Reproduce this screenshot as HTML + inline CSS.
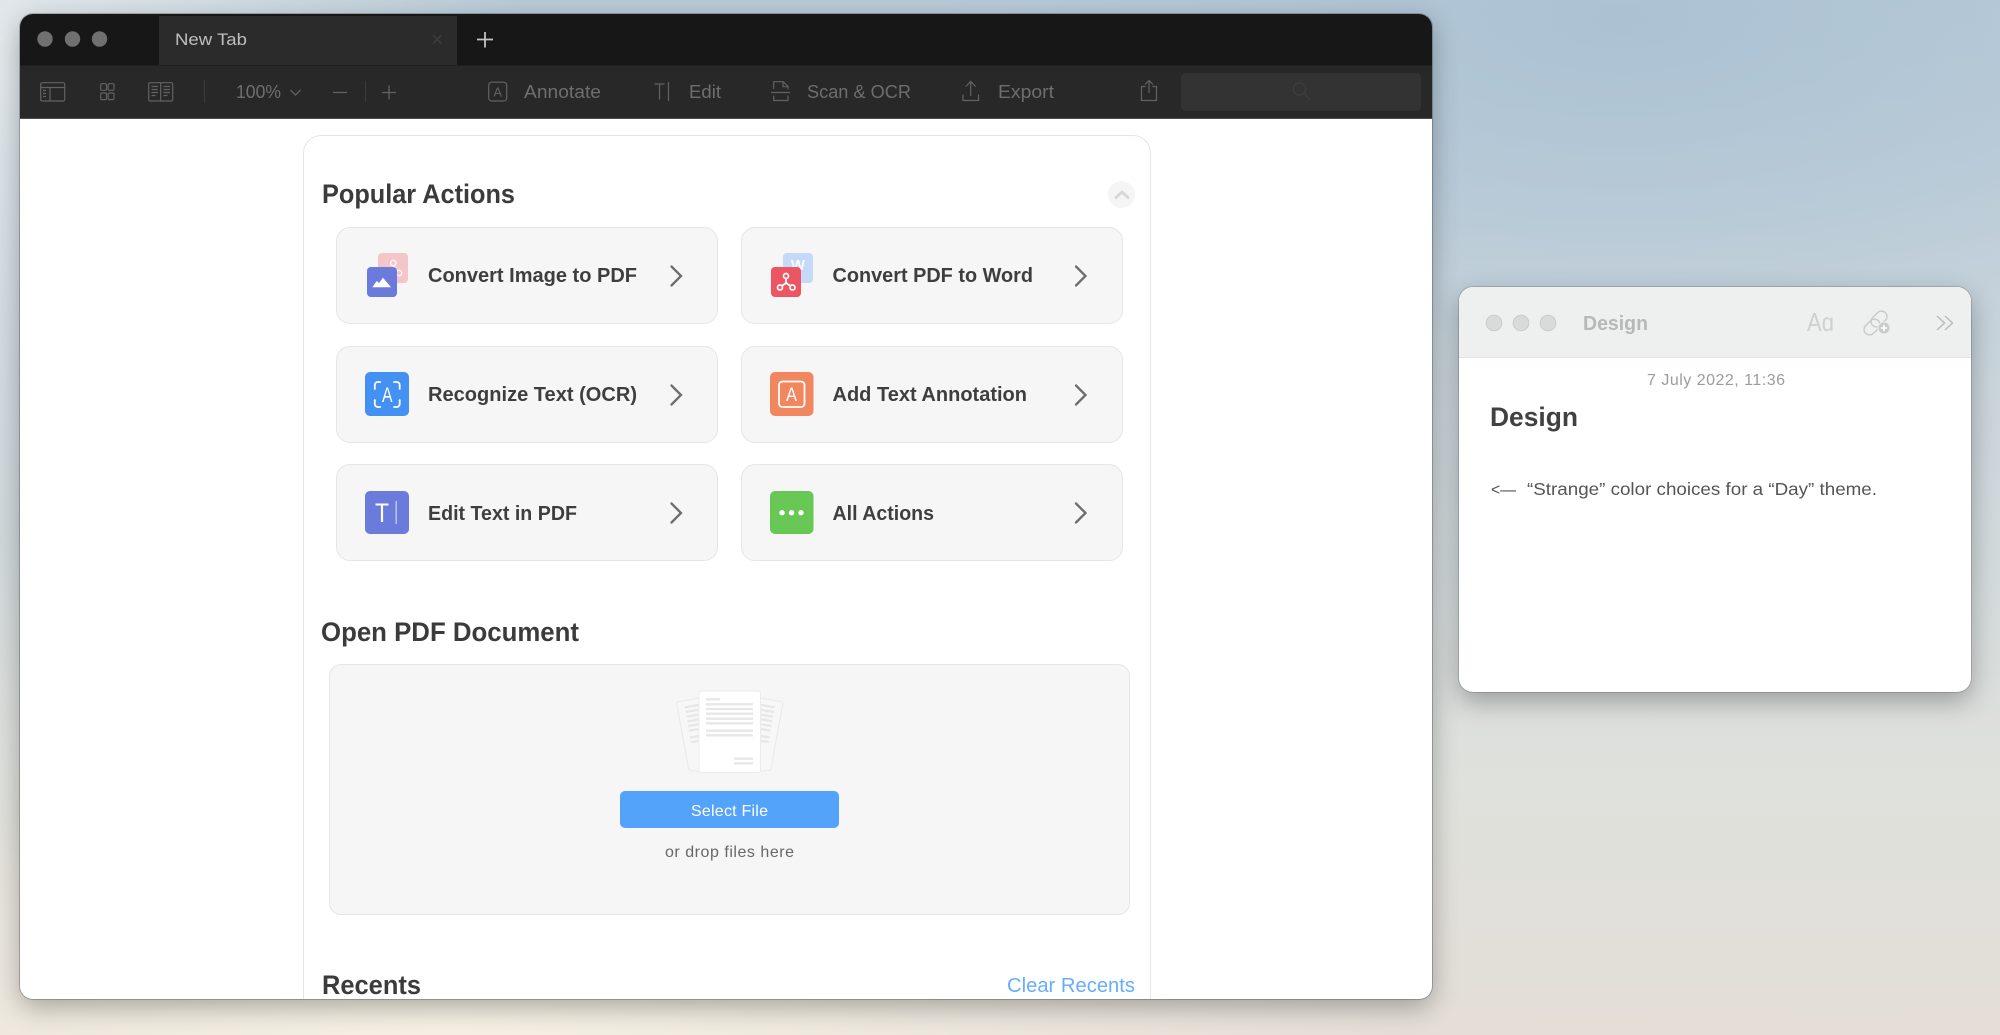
<!DOCTYPE html>
<html lang="en">
<head>
<meta charset="utf-8">
<title>PDF Expert and Notes</title>
<style>
html,body{margin:0;padding:0;width:2000px;height:1035px;overflow:hidden;font-family:"Liberation Sans",sans-serif}
#bg{position:absolute;left:0;top:0;width:2000px;height:1035px;background:
radial-gradient(ellipse 700px 330px at 1620px 20px,rgba(172,194,211,1) 0,rgba(172,194,211,0) 100%),
radial-gradient(ellipse 520px 500px at 0px 40px,rgba(232,236,238,.9) 0,rgba(232,236,238,0) 100%),
radial-gradient(ellipse 950px 280px at 450px 1045px,rgba(246,241,228,1) 0,rgba(246,241,228,0) 100%),
linear-gradient(to bottom,#b9cbd8 0,#c5d2db 300px,#d3dadc 560px,#dfe1dc 780px,#e2dfd9 960px,#e4ded6 1035px)}
.win{position:absolute;overflow:hidden;background:#fff;box-sizing:border-box}
#main{left:20px;top:14px;width:1412px;height:985px;border-radius:13px;box-shadow:0 0 0 1px rgba(0,0,0,.22),0 8px 26px rgba(0,0,0,.3)}
#notes{left:1459px;top:287px;width:512px;height:405px;border-radius:14px;box-shadow:0 0 0 1px rgba(0,0,0,.14),0 9px 26px rgba(0,0,0,.3)}
.abs{position:absolute;box-sizing:border-box}
.card{position:absolute;box-sizing:border-box;width:382px;height:97px;background:#f6f6f6;border:1.5px solid #e6e6e6;border-radius:14px}
#ov{position:absolute;left:0;top:0;display:block;overflow:hidden}
text{font-family:"Liberation Sans",sans-serif;white-space:pre}
.tb{font-size:18px;fill:#6e6e6e}
.ct{font-size:20px;font-weight:700;fill:#3e3e3e}
.h{font-size:26.5px;font-weight:700;fill:#3b3b3b}
</style>
</head>
<body>
<div id="bg"></div>

<div id="main" class="win">
  <div class="abs" style="left:0;top:0;width:1412px;height:51px;background:#171717"></div>
  <div class="abs" style="left:139px;top:2px;width:298px;height:49px;background:#2b2b2b"></div>
  <div class="abs" style="left:0;top:51px;width:1412px;height:54px;background:#282828;border-top:1px solid #202020;border-bottom:1px solid #4e4e4e"></div>
  <div class="abs" style="left:1161px;top:59px;width:240px;height:38px;background:#333;border-radius:5px"></div>
  <div class="abs" style="left:283px;top:121px;width:848px;height:864px;border:1.5px solid #e6e6e6;border-bottom:0;border-radius:18px 18px 0 0"></div>
  <div class="abs" style="left:1088px;top:166.500px;width:27px;height:27px;border-radius:50%;background:#f5f5f5"></div>
  <div class="card" style="left:316px;top:213px"></div>
  <div class="card" style="left:721px;top:213px"></div>
  <div class="card" style="left:316px;top:332px"></div>
  <div class="card" style="left:721px;top:332px"></div>
  <div class="card" style="left:316px;top:450px"></div>
  <div class="card" style="left:721px;top:450px"></div>
  <div class="abs" style="left:309px;top:649.500px;width:801px;height:251px;background:#f6f6f6;border:1.5px solid #e6e6e6;border-radius:12px"></div>
  <div class="abs" style="left:600px;top:777px;width:219px;height:37px;background:#54a3fb;border-radius:5px"></div>
</div>

<div id="notes" class="win">
  <div class="abs" style="left:0;top:0;width:512px;height:71px;background:#eef0ef;border-bottom:1px solid #e2e3e2"></div>
</div>

<svg id="ov" width="2000" height="1035" viewBox="0 0 2000 1035" xmlns="http://www.w3.org/2000/svg">
  <!-- main traffic lights -->
  <circle cx="45" cy="39" r="7.700" fill="#707070"/><circle cx="72.500" cy="39" r="7.700" fill="#707070"/><circle cx="99.500" cy="39" r="7.700" fill="#707070"/>
  <text x="175" y="45" font-size="17" fill="#bebebe" textLength="72" lengthAdjust="spacingAndGlyphs">New Tab</text>
  <path d="M433 35l8.500 8.500M441.500 35l-8.500 8.500" stroke="#3e3e3e" stroke-width="1.400" fill="none"/>
  <path d="M485 32v15.500M477 39.500h16" stroke="#c4c4c4" stroke-width="1.800" fill="none"/>

  <!-- toolbar icons -->
  <g fill="none" stroke="#626262" stroke-width="1.200">
    <rect x="40.700" y="82.700" width="24" height="18.300" rx="1.500"/><path d="M40.700 87.500h24M50 87.500v13.500M43 90.500h3M43 93.500h3M43 96.500h3"/>
    <rect x="100.700" y="83.700" width="5.800" height="6.600" rx="1.200"/><rect x="108.200" y="83.700" width="5.800" height="6.600" rx="1.200"/>
    <rect x="100.700" y="93" width="5.800" height="6.600" rx="1.200"/><rect x="108.200" y="93" width="5.800" height="6.600" rx="1.200"/>
    <rect x="148.700" y="82.700" width="24" height="18.300" rx="1.500"/><path d="M160.700 82.700v18.300M151.500 86.500h6.500M151.500 89.500h6.500M151.500 92.500h6.500M151.500 95.500h4M163.500 86.500h6.500M163.500 89.500h6.500M163.500 92.500h6.500M163.500 95.500h4"/>
  </g>
  <path d="M204.500 80v23M365.500 81v21" stroke="#3a3a3a" stroke-width="1"/>
  <text class="tb" x="236" y="98" textLength="45" lengthAdjust="spacingAndGlyphs">100%</text>
  <path d="M290.500 90l5 5 5-5" stroke="#626262" stroke-width="1.300" fill="none"/>
  <path d="M333 92.500h14M382 92.500h14M389 85.500v14" stroke="#626262" stroke-width="1.300" fill="none"/>
  <rect x="488.700" y="82.200" width="18" height="18.800" rx="3" fill="none" stroke="#626262" stroke-width="1.200"/>
  <text x="497.700" y="96.500" font-size="13" fill="#626262" text-anchor="middle">A</text>
  <text class="tb" x="524" y="98" textLength="77" lengthAdjust="spacingAndGlyphs">Annotate</text>
  <path d="M654.500 84h10M659.500 84v15.500M668.500 82v19" stroke="#626262" stroke-width="1.200" fill="none"/>
  <text class="tb" x="689" y="98" textLength="32" lengthAdjust="spacingAndGlyphs">Edit</text>
  <path d="M773.700 89V81.700h9.500l4.800 4.800V89M771 92.500h19M773.700 95.500v5h14.300v-5M783 81.700v5h5" stroke="#626262" stroke-width="1.200" fill="none"/>
  <text class="tb" x="807" y="98" textLength="104" lengthAdjust="spacingAndGlyphs">Scan &amp; OCR</text>
  <path d="M970.700 96V81.500M965.800 86.500l4.900-5 4.900 5M963 94.500v6h15.500v-6" stroke="#626262" stroke-width="1.200" fill="none"/>
  <text class="tb" x="998" y="98" textLength="56" lengthAdjust="spacingAndGlyphs">Export</text>
  <path d="M1149 93V80.700M1145 84.500l4-4 4 4M1145.500 86.500h-4v14h15v-14h-4" stroke="#626262" stroke-width="1.200" fill="none"/>
  <circle cx="1299.500" cy="89" r="6.200" fill="none" stroke="#3d3d3d" stroke-width="1.500"/><path d="M1304 93.500l6 6" stroke="#3d3d3d" stroke-width="1.800" fill="none"/>

  <!-- Popular actions -->
  <text class="h" x="322" y="203" textLength="193" lengthAdjust="spacingAndGlyphs">Popular Actions</text>
  <path d="M1116 197.500l6-5.500 6 5.500" stroke="#d6d6d6" stroke-width="2.800" fill="none" stroke-linecap="round" stroke-linejoin="round"/>

  <!-- icon: image to pdf -->
  <rect x="378" y="253" width="30" height="30" rx="4" fill="#f4c6c9"/>
  <g fill="none" stroke="#fff" stroke-width="1.400" opacity=".85"><circle cx="393.300" cy="263" r="2.700"/><circle cx="399" cy="273" r="2.700"/><path d="M393.800 266l3.500 5"/></g>
  <rect x="367" y="267" width="30" height="30" rx="4" fill="#6a7bdc"/>
  <path d="M372.300 287.300l4.400-6.300 2.300 2 4-5.300 8 9.600z" fill="#fff"/>
  <text class="ct" x="428" y="282" textLength="209" lengthAdjust="spacingAndGlyphs">Convert Image to PDF</text>
  <path d="M671.500 266.500l9.500 9.500-9.500 9.500" stroke="#6d6d6d" stroke-width="2.300" fill="none" stroke-linecap="round"/>

  <!-- icon: pdf to word -->
  <rect x="783" y="253" width="30" height="30" rx="4" fill="#c4daf8"/>
  <text x="798" y="270" font-size="15" font-weight="700" fill="#fff" text-anchor="middle" opacity=".9">W</text>
  <rect x="771" y="267" width="30" height="30" rx="4" fill="#ec5561"/>
  <g fill="none" stroke="#fff" stroke-width="1.700"><circle cx="786" cy="276" r="2.500"/><circle cx="780" cy="287.500" r="2.500"/><circle cx="792.500" cy="287.500" r="2.500"/><path d="M786 278.500v4.500M786 283l-4.200 3M786 283l4.600 3"/></g>
  <text class="ct" x="832.500" y="282" textLength="200.500" lengthAdjust="spacingAndGlyphs">Convert PDF to Word</text>
  <path d="M1076 266.500l9.500 9.500-9.500 9.500" stroke="#6d6d6d" stroke-width="2.300" fill="none" stroke-linecap="round"/>

  <!-- icon: OCR -->
  <rect x="365" y="372" width="44" height="44" rx="5" fill="#4391f2"/>
  <path d="M374.800 389v-4a3 3 0 0 1 3-3h2.500M394 382h2.700a3 3 0 0 1 3 3v4M399.700 400v4a3 3 0 0 1-3 3H394M380.300 407h-2.500a3 3 0 0 1-3-3v-4" stroke="#fff" stroke-width="1.800" fill="none" stroke-linecap="round"/>
  <text x="382" y="402" font-size="21" fill="#fff" textLength="10.500" lengthAdjust="spacingAndGlyphs">A</text>
  <text class="ct" x="428" y="401" textLength="209" lengthAdjust="spacingAndGlyphs">Recognize Text (OCR)</text>
  <path d="M671.500 385.500l9.500 9.500-9.500 9.500" stroke="#6d6d6d" stroke-width="2.300" fill="none" stroke-linecap="round"/>

  <!-- icon: Annotation -->
  <rect x="770" y="372" width="43.500" height="44" rx="5" fill="#f2865f"/>
  <rect x="779" y="381.500" width="25.500" height="25.500" rx="3.500" fill="none" stroke="#fff" stroke-width="1.800"/>
  <text x="786" y="401" font-size="19.500" fill="#fff" textLength="11" lengthAdjust="spacingAndGlyphs">A</text>
  <text class="ct" x="832.500" y="401" textLength="194.500" lengthAdjust="spacingAndGlyphs">Add Text Annotation</text>
  <path d="M1076 385.500l9.500 9.500-9.500 9.500" stroke="#6d6d6d" stroke-width="2.300" fill="none" stroke-linecap="round"/>

  <!-- icon: Edit -->
  <rect x="365" y="491" width="44" height="43" rx="5" fill="#6a7bdc"/>
  <text x="375" y="522" font-size="26.500" fill="#fff" textLength="14" lengthAdjust="spacingAndGlyphs">T</text>
  <path d="M396.200 501v23" stroke="#bcc5f0" stroke-width="1.500"/>
  <text class="ct" x="428" y="520" textLength="149" lengthAdjust="spacingAndGlyphs">Edit Text in PDF</text>
  <path d="M671.500 503.500l9.500 9.500-9.500 9.500" stroke="#6d6d6d" stroke-width="2.300" fill="none" stroke-linecap="round"/>

  <!-- icon: All Actions -->
  <rect x="770" y="491" width="43.500" height="43" rx="5" fill="#69c755"/>
  <circle cx="782" cy="512.700" r="2.700" fill="#fff"/><circle cx="791.500" cy="512.700" r="2.700" fill="#fff"/><circle cx="801" cy="512.700" r="2.700" fill="#fff"/>
  <text class="ct" x="832.500" y="520" textLength="101.500" lengthAdjust="spacingAndGlyphs">All Actions</text>
  <path d="M1076 503.500l9.500 9.500-9.500 9.500" stroke="#6d6d6d" stroke-width="2.300" fill="none" stroke-linecap="round"/>

  <!-- Open PDF -->
  <text class="h" x="321" y="641" textLength="258" lengthAdjust="spacingAndGlyphs">Open PDF Document</text>

  <!-- document illustration -->
  <path d="M700 698L678.500 701.500a2 2 0 0 0-1.700 2.300L688.500 768.500a2 2 0 0 0 2 1.600L700 771.500z" fill="#f7f7f7" stroke="#e9e9e9" stroke-width="1"/>
  <path d="M760 698L781 701.500a2 2 0 0 1 1.700 2.300L771 768.500a2 2 0 0 1-2 1.600L760 771.500z" fill="#f7f7f7" stroke="#e9e9e9" stroke-width="1"/>
  <g stroke="#e6e6e6" stroke-width="2.200" fill="none">
    <path d="M685 707.300l14-2.400M685.800 712l13.200-2.300M686.600 716.700l12.400-2.100M687.400 721.300l11.600-2M688.200 726l10.800-1.900M689 730.700l10-1.700M690 737.500l9-1.500M690.800 742.200l8.200-1.400"/>
    <path d="M774.600 707.300l-14-2.400M773.800 712l-13.200-2.300M773 716.700l-12.400-2.100M772.200 721.300l-11.600-2M771.400 726l-10.800-1.900M770.600 730.700l-10-1.700M769.600 737.500l-9-1.500M768.800 742.200l-8.200-1.400"/>
  </g>
  <rect x="699" y="691" width="61.500" height="81.500" rx="2.500" fill="#fff" stroke="#ececec" stroke-width="1"/>
  <g stroke="#e7e7e7" stroke-width="2.300" fill="none">
    <path d="M706 699.300h14M706 704.300h47M706 709h47M706 713.700h47M706 718.700h47M706 723.300h47M706 730.700h47M706 735.300h47M734 758.700h19M734 763.300h19"/>
  </g>
  <text x="691" y="816" font-size="16" fill="#fff" textLength="77" lengthAdjust="spacing">Select File</text>
  <text x="665" y="857" font-size="16" fill="#676767" textLength="129" lengthAdjust="spacing">or drop files here</text>

  <text class="h" x="322" y="994" textLength="99" lengthAdjust="spacingAndGlyphs">Recents</text>
  <text x="1007" y="992" font-size="20" fill="#66adfb" textLength="128" lengthAdjust="spacingAndGlyphs">Clear Recents</text>

  <!-- notes window -->
  <g fill="#d9dad9" stroke="#c9caca" stroke-width="1"><circle cx="1494" cy="323" r="7.800"/><circle cx="1521" cy="323" r="7.800"/><circle cx="1548" cy="323" r="7.800"/></g>
  <text x="1583" y="330" font-size="20" font-weight="700" fill="#b7b8b8" textLength="65" lengthAdjust="spacingAndGlyphs">Design</text>
  <text x="1807" y="331" font-size="26" fill="#cfd0d0" textLength="27" lengthAdjust="spacingAndGlyphs">Aɑ</text>
  <g fill="none" stroke="#c9caca" stroke-width="1.400">
    <rect x="1863" y="321.500" width="18" height="11" rx="5.500" transform="rotate(-45 1872 327)"/>
    <rect x="1870" y="313.500" width="18" height="11" rx="5.500" transform="rotate(-45 1879 319)"/>
  </g>
  <circle cx="1884" cy="328" r="6" fill="#c9caca" stroke="#eef0ef" stroke-width="1"/>
  <path d="M1880.800 328h6.400M1884 324.800v6.400" stroke="#fff" stroke-width="1.500" fill="none"/>
  <path d="M1937 316l7.500 7-7.500 7M1945 316l7.500 7-7.500 7" stroke="#bbbcbc" stroke-width="1.500" fill="none"/>
  <text x="1647" y="385" font-size="16" fill="#9c9c9c" textLength="138" lengthAdjust="spacing">7 July 2022, 11:36</text>
  <text x="1490" y="426" font-size="27" font-weight="700" fill="#414141" textLength="88" lengthAdjust="spacingAndGlyphs">Design</text>
  <text x="1491" y="495" font-size="17" fill="#555" textLength="25" lengthAdjust="spacingAndGlyphs">&lt;—</text>
  <text x="1527" y="495" font-size="17.500" fill="#555" textLength="350" lengthAdjust="spacingAndGlyphs">“Strange” color choices for a “Day” theme.</text>
</svg>
</body>
</html>
